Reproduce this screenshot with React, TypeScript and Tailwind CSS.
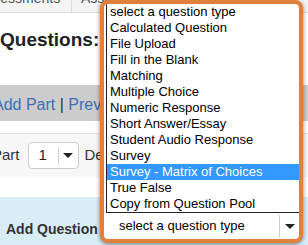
const questionTypes = [
  "select a question type",
  "Calculated Question",
  "File Upload",
  "Fill in the Blank",
  "Matching",
  "Multiple Choice",
  "Numeric Response",
  "Short Answer/Essay",
  "Student Audio Response",
  "Survey",
  "Survey - Matrix of Choices",
  "True False",
  "Copy from Question Pool",
]

const selected = "Survey - Matrix of Choices"

function Caret() {
  return <span className="h-0 w-0 border-x-[5px] border-t-[5px] border-x-transparent border-t-[#222]" />
}

export default function App() {
  return (
    <div className="relative h-[245px] w-[308px] overflow-hidden bg-white font-['Liberation_Sans',Arial,sans-serif]">
      {/* tabs */}
      <div className="flex h-[13px] overflow-hidden border-b border-[#dddddd] bg-[#f4f4f4] text-[14px] leading-[16px] text-[#555]">
        <div className="w-[72px] shrink-0 overflow-hidden border-r border-[#dddddd]">
          <span className="-ml-[23px] -mt-[10px] block whitespace-nowrap">Assessments</span>
        </div>
        <div className="pl-[9px]">
          <span className="-mt-[10px] block whitespace-nowrap">Assignments</span>
        </div>
      </div>

      <div className="h-[72px] pt-[16px]">
        <h1 className="whitespace-nowrap text-[19px] font-bold leading-[22px] text-[#222]">Questions: Quiz 1</h1>
      </div>

      <div className="h-[36px] bg-[#cccccc] pt-[4px]">
        <div className="-ml-[7px] whitespace-nowrap text-[16px] leading-[32px] text-[#3a6fb5]">
          <a>Add Part</a> <span className="text-[#333]">|</span> <a>Preview</a>
        </div>
      </div>

      <div className="h-[12px]" />

      <div className="flex h-[44px] items-center gap-[8px] border-t border-[#e3e3e3] bg-[#f7f7f7] pb-[1px] text-[15px] text-[#333]">
        <span className="-ml-[8px]">Part</span>
        <div className="flex h-[27px] w-[51px] items-center rounded-[4px] border border-[#cccccc] bg-white pl-[10px]">
          <span className="w-[19px] text-[#222]">1</span>
          <span className="h-[17px] w-px bg-[#cccccc]" />
          <span className="flex flex-1 justify-center">
            <Caret />
          </span>
        </div>
        <span className="-ml-[2px] whitespace-nowrap">Default Points</span>
      </div>

      <div className="h-[20px]" />

      <div className="h-[48px] bg-[#d9edf7] pl-[6px] pt-[20px]">
        <span className="whitespace-nowrap text-[14px] font-bold leading-[18px] text-[#333]">Add Question</span>
      </div>

      {/* open question type dropdown */}
      <div className="absolute left-[100px] top-0 flex h-[243px] w-[203px] flex-col overflow-hidden rounded-[8px] border-4 border-[#e17f3d] bg-white shadow-[0_1px_4px_rgba(0,0,0,0.5)]">
        <ul className="ml-[2px] border-b border-l border-[#222] text-[13px] leading-[16px] text-black">
          {questionTypes.map((t) => (
            <li
              key={t}
              className={`h-[16px] whitespace-nowrap pl-[3px] ${t === selected ? "bg-[#3399ff] text-white" : ""}`}
            >
              {t}
            </li>
          ))}
        </ul>
        <div className="flex h-[26px] items-center text-[13px] text-black">
          <span className="flex-1 whitespace-nowrap pl-[15px]">select a question type</span>
          <span className="h-[22px] w-px bg-[#cccccc]" />
          <span className="flex w-[19px] justify-center">
            <Caret />
          </span>
        </div>
      </div>
    </div>
  )
}
